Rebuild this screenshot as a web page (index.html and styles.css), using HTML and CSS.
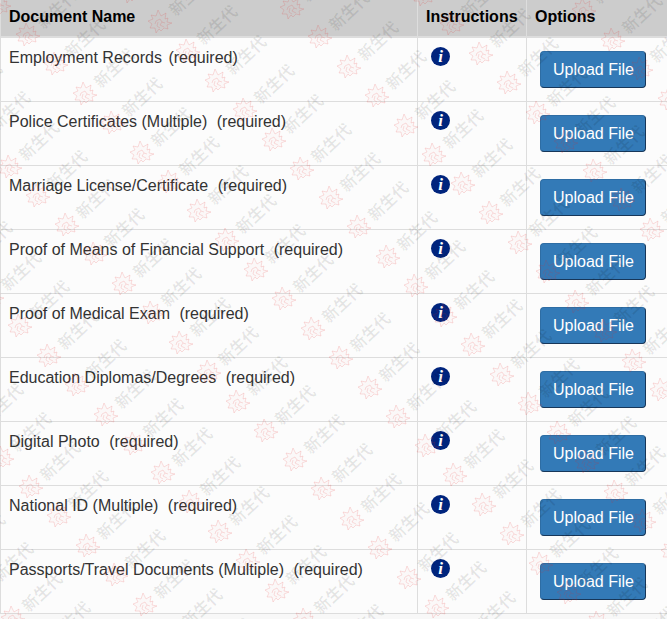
FILE: index.html
```html
<!DOCTYPE html>
<html lang="en">
<head>
<meta charset="utf-8">
<title>Documents</title>
<link rel="stylesheet" href="styles.css">
</head>
<body>
<table class="documents">
  <colgroup><col><col class="col-info"><col class="col-options"></colgroup>
  <thead>
    <tr><th scope="col">Document Name</th><th scope="col">Instructions</th><th scope="col">Options</th></tr>
  </thead>
  <tbody>
    <tr><td>Employment Records <span class="required required-near">(required)</span></td><td><button type="button" class="info">i</button></td><td><button type="button" class="upload">Upload File</button></td></tr>
    <tr><td>Police Certificates (Multiple) <span class="required">(required)</span></td><td><button type="button" class="info">i</button></td><td><button type="button" class="upload">Upload File</button></td></tr>
    <tr><td>Marriage License/Certificate <span class="required">(required)</span></td><td><button type="button" class="info">i</button></td><td><button type="button" class="upload">Upload File</button></td></tr>
    <tr><td>Proof of Means of Financial Support <span class="required">(required)</span></td><td><button type="button" class="info">i</button></td><td><button type="button" class="upload">Upload File</button></td></tr>
    <tr><td>Proof of Medical Exam <span class="required">(required)</span></td><td><button type="button" class="info">i</button></td><td><button type="button" class="upload">Upload File</button></td></tr>
    <tr><td>Education Diplomas/Degrees <span class="required">(required)</span></td><td><button type="button" class="info">i</button></td><td><button type="button" class="upload">Upload File</button></td></tr>
    <tr><td>Digital Photo <span class="required">(required)</span></td><td><button type="button" class="info">i</button></td><td><button type="button" class="upload">Upload File</button></td></tr>
    <tr><td>National ID (Multiple) <span class="required">(required)</span></td><td><button type="button" class="info">i</button></td><td><button type="button" class="upload">Upload File</button></td></tr>
    <tr><td>Passports/Travel Documents (Multiple) <span class="required">(required)</span></td><td><button type="button" class="info">i</button></td><td><button type="button" class="upload">Upload File</button></td></tr>
  </tbody>
</table>

<svg class="watermark" aria-hidden="true">
  <defs>
    <!-- one mark: emblem and slanted name -->
    <g id="mark">
      <path class="emblem" d="M-2-12 L1-6 L6-9 L5-3 L8-4 L7 0 L12 1 L7 3 L8 7 L4 6 L1 9 L-1 7 L-4 11 L-5 6 L-10 6 L-8 2 L-12-1 L-7-3 L-9-7 L-4-6 Z M-5 2 L-4-1 L0-3 L2 0 L0 3 L4 5 M2 0 L5 1 M-2 0 L-3 4 L0 6"/>
      <text class="name" transform="translate(29 -26) rotate(-43)" text-anchor="middle" y="6">新生代</text>
    </g>
    <!-- a diagonal run, doubled at each step -->
    <g id="run2"><use href="#mark"/><use href="#mark" x="28" y="29"/></g>
    <g id="run4"><use href="#run2"/><use href="#run2" x="57" y="59"/></g>
    <g id="run8"><use href="#run4"/><use href="#run4" x="114" y="118"/></g>
    <g id="run16"><use href="#run8"/><use href="#run8" x="228" y="235"/></g>
    <g id="run"><use href="#run16"/><use href="#run16" x="456" y="470"/></g>
  </defs>
  <use href="#run" x="-557" y="30"/>
  <use href="#run" x="-425" y="17"/>
  <use href="#run" x="-293" y="3"/>
  <use href="#run" x="-161" y="-10"/>
  <use href="#run" x="-29" y="-24"/>
  <use href="#run" x="103" y="-37"/>
  <use href="#run" x="235" y="-51"/>
  <use href="#run" x="367" y="-64"/>
  <use href="#run" x="499" y="-78"/>
  <use href="#run" x="631" y="-91"/>
</svg>
</body>
</html>
```
FILE: styles.css
```css
body {
  margin: 0;
  background: #f8f8f8;
  color: #333;
  font: 16px/23px "Liberation Sans", Arial, sans-serif;
}

.documents {
  width: 100%;
  table-layout: fixed;
  border-collapse: separate;
  border-spacing: 0;
  border-left: 1px solid #ddd;
}

.col-info { width: 109px; }
.col-options { width: 140px; }

th,
td {
  padding: 8px;
  border-right: 1px solid #ddd;
  border-bottom: 1px solid #ddd;
  text-align: left;
  vertical-align: top;
}

th:last-child,
td:last-child { border-right: 0; }

th {
  padding-top: 5px;
  border-bottom-width: 2px;
  background: #ccc;
  color: #000;
}

td { background: #fcfcfc; }

.required { margin-left: 5px; }
.required-near { margin-left: 2px; }

.info {
  display: block;
  width: 19px;
  height: 19px;
  margin: 1px 5px;
  padding: 0;
  border: 0;
  border-radius: 50%;
  background: #00247d;
  color: #fff;
  font: italic bold 17px/18px "Liberation Serif", serif;
  text-align: center;
}

.upload {
  display: block;
  margin: 5px;
  padding: 6px 11px 6px 12px;
  border: 1px solid;
  border-color: #2e6da4 #17375a #17375a #2e6da4;
  border-radius: 4px;
  background: #337ab7;
  color: #fff;
  font: inherit;
}

.watermark {
  position: absolute;
  inset: 0;
  width: 100%;
  height: 100%;
  overflow: hidden;
  pointer-events: none;
}

.emblem {
  fill: rgba(225, 40, 40, 0.02);
  stroke: rgba(225, 40, 40, 0.15);
  stroke-width: 1;
}

.name {
  fill: rgba(0, 0, 0, 0.09);
  font: bold 16px "Noto Sans CJK SC", sans-serif;
}
```
